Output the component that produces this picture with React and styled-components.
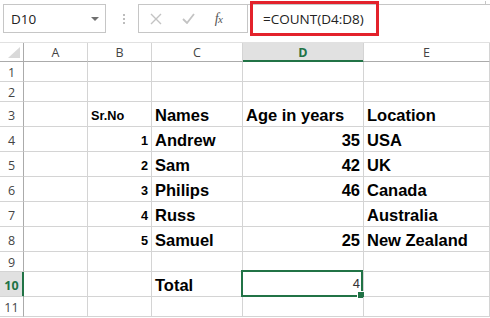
import React from 'react'
import styled, { createGlobalStyle, css } from 'styled-components'

const GlobalStyle = createGlobalStyle`
  html, body {
    margin: 0;
    padding: 0;
    background: #fff;
  }
  body {
    width: 490px;
    height: 318px;
    overflow: hidden;
  }
`

const GREEN = '#217346'
const GRID = '#d4d4d4'
const UI_FONT = `"Open Sans", "Noto Sans", sans-serif`
const CELL_FONT = `"Liberation Sans", Arial, sans-serif`

const Page = styled.div`
  width: 490px;
  height: 318px;
  overflow: hidden;
  position: relative;
`

const Toolbar = styled.div`
  height: 42px;
  display: flex;
  align-items: flex-start;
  padding-top: 4px;
  box-sizing: border-box;
`

const NameBox = styled.div`
  margin-left: 3px;
  width: 103px;
  height: 29px;
  box-sizing: border-box;
  border: 1px solid #c6c6c6;
  display: flex;
  align-items: center;
  justify-content: space-between;
  padding: 0 6px 0 7px;
  font-family: ${UI_FONT};
  font-size: 13.5px;
  color: #222;
`

const Caret = styled.span`
  width: 0;
  height: 0;
  border-left: 4px solid transparent;
  border-right: 4px solid transparent;
  border-top: 4px solid #707070;
`

const Dots = styled.div`
  width: 29px;
  height: 29px;
  margin-left: 3px;
  display: flex;
  flex-direction: column;
  align-items: center;
  justify-content: center;
  gap: 2px;
  span {
    width: 2px;
    height: 2px;
    background: #bdbdbd;
  }
`

const FormulaBox = styled.div`
  flex: 1;
  height: 29px;
  display: flex;
  box-sizing: border-box;
  border-top: 1px solid #c6c6c6;
`

const Buttons = styled.div`
  width: 110px;
  height: 28px;
  border-left: 1px solid #c6c6c6;
  border-right: 1px solid #c6c6c6;
  border-bottom: 1px solid #c6c6c6;
  box-sizing: border-box;
  display: flex;
  align-items: center;
  padding-left: 11px;
`

const Btn = styled.span`
  width: 37px;
  display: flex;
  justify-content: flex-start;
  align-items: center;
`

const Fx = styled.span`
  font-family: "Liberation Serif", "Times New Roman", serif;
  font-style: italic;
  font-size: 14px;
  color: #555;
  letter-spacing: -0.5px;
  span {
    font-size: 11px;
  }
`

const FormulaText = styled.div`
  flex: 1;
  position: relative;
  padding-left: 15px;
  display: flex;
  align-items: center;
  font-family: ${UI_FONT};
  font-size: 13.5px;
  color: #222;
  height: 28px;
`

const Highlight = styled.div`
  position: absolute;
  left: 2px;
  top: -4px;
  width: 129px;
  height: 35px;
  box-sizing: border-box;
  border: 3px solid #e3222b;
`

const EdgeMark = styled.div`
  position: absolute;
  right: 4px;
  top: -4px;
  width: 1px;
  height: 4px;
  background: #c6c6c6;
`

const Sheet = styled.div`
  display: grid;
  grid-template-columns: 24px 64px 64px 91px 121px 1fr;
  border-top: 1px solid #e1e1e1;
`

const ColHead = styled.div`
  height: 19px;
  box-sizing: border-box;
  border-right: 1px solid ${GRID};
  border-bottom: 1px solid #ababab;
  display: flex;
  align-items: center;
  justify-content: center;
  font-family: ${UI_FONT};
  font-size: 12.5px;
  color: #444;
  ${p =>
    p.$active &&
    css`
      background: #e1e1e1;
      color: ${GREEN};
      font-weight: 700;
      box-shadow: inset 0 -1px 0 ${GREEN};
      border-bottom-color: ${GREEN};
    `}
`

const Corner = styled(ColHead)`
  border-right-color: #ababab;
  justify-content: flex-end;
  align-items: flex-end;
  padding: 0 3px 3px 0;
`

const RowHead = styled.div`
  height: ${p => p.$h}px;
  box-sizing: border-box;
  border-right: 1px solid #ababab;
  border-bottom: 1px solid ${GRID};
  display: flex;
  align-items: center;
  justify-content: center;
  padding-top: 2px;
  font-family: ${UI_FONT};
  font-size: 12.5px;
  color: #444;
  ${p =>
    p.$active &&
    css`
      background: #e1e1e1;
      color: ${GREEN};
      font-weight: 700;
      border-right-color: ${GREEN};
      box-shadow: inset -1px 0 0 ${GREEN};
    `}
`

const Cell = styled.div`
  height: ${p => p.$h}px;
  box-sizing: border-box;
  border-right: 1px solid ${GRID};
  border-bottom: 1px solid ${GRID};
  position: relative;
  display: flex;
  align-items: flex-end;
  justify-content: ${p => (p.$right ? 'flex-end' : 'flex-start')};
  padding: 0 3px 1px 3px;
  font-family: ${CELL_FONT};
  color: #000;
  white-space: nowrap;
  ${p =>
    p.$size === 'lg' &&
    css`
      font-size: 16.5px;
      font-weight: 700;
      line-height: 20px;
    `}
  ${p =>
    p.$size === 'sm' &&
    css`
      font-size: 12.7px;
      font-weight: 700;
      line-height: 16px;
      padding-bottom: 2px;
    `}
  ${p =>
    p.$size === 'plain' &&
    css`
      font-size: 13px;
      color: #333;
      line-height: 16px;
      padding-bottom: 4px;
    `}
`

const Selection = styled.div`
  position: absolute;
  left: -2px;
  top: -2px;
  right: 0;
  bottom: -1px;
  border: 2px solid ${GREEN};
  pointer-events: none;
`

const Handle = styled.div`
  position: absolute;
  right: -4px;
  bottom: -4px;
  width: 6px;
  height: 6px;
  background: ${GREEN};
  border: 1px solid #fff;
`

const columns = ['A', 'B', 'C', 'D', 'E']

const rows = [
  { n: 1, h: 20 },
  { n: 2, h: 20 },
  { n: 3, h: 25, b: 'Sr.No', c: 'Names', d: 'Age in years', e: 'Location', head: true },
  { n: 4, h: 25, b: '1', c: 'Andrew', d: '35', e: 'USA' },
  { n: 5, h: 25, b: '2', c: 'Sam', d: '42', e: 'UK' },
  { n: 6, h: 25, b: '3', c: 'Philips', d: '46', e: 'Canada' },
  { n: 7, h: 25, b: '4', c: 'Russ', e: 'Australia' },
  { n: 8, h: 25, b: '5', c: 'Samuel', d: '25', e: 'New Zealand' },
  { n: 9, h: 20 },
  { n: 10, h: 25, c: 'Total', d: '4', active: true },
  { n: 11, h: 20 },
]

function CornerMark() {
  return (
    <svg width="12" height="11" viewBox="0 0 12 11">
      <polygon points="12,0 12,11 0,11" fill="#d9d9d9" />
    </svg>
  )
}

function Row({ row }) {
  const { n, h, b, c, d, e, head, active } = row
  return (
    <>
      <RowHead $h={h} $active={active}>{n}</RowHead>
      <Cell $h={h} />
      <Cell $h={h} $size="sm" $right={!head}>{b}</Cell>
      <Cell $h={h} $size="lg">{c}</Cell>
      <Cell $h={h} $size={active ? 'plain' : 'lg'} $right={!head}>
        {d}
        {active && (
          <Selection>
            <Handle />
          </Selection>
        )}
      </Cell>
      <Cell $h={h} $size="lg">{e}</Cell>
    </>
  )
}

export default function App() {
  return (
    <Page>
      <GlobalStyle />
      <Toolbar>
        <NameBox>
          D10
          <Caret />
        </NameBox>
        <Dots>
          <span />
          <span />
          <span />
        </Dots>
        <FormulaBox>
          <Buttons>
            <Btn>
              <svg width="12" height="12" viewBox="0 0 12 12">
                <path d="M1 1 L11 11 M11 1 L1 11" stroke="#c3c3c3" strokeWidth="1.4" />
              </svg>
            </Btn>
            <Btn>
              <svg width="13" height="11" viewBox="0 0 13 11">
                <path d="M1 6 L5 10 L12 1" stroke="#c3c3c3" strokeWidth="1.8" fill="none" />
              </svg>
            </Btn>
            <Btn>
              <Fx>
                f<span>x</span>
              </Fx>
            </Btn>
          </Buttons>
          <FormulaText>
            =COUNT(D4:D8)
            <Highlight />
            <EdgeMark />
          </FormulaText>
        </FormulaBox>
      </Toolbar>
      <Sheet>
        <Corner>
          <CornerMark />
        </Corner>
        {columns.map(col => (
          <ColHead key={col} $active={col === 'D'}>
            {col}
          </ColHead>
        ))}
        {rows.map(row => (
          <Row key={row.n} row={row} />
        ))}
      </Sheet>
    </Page>
  )
}
